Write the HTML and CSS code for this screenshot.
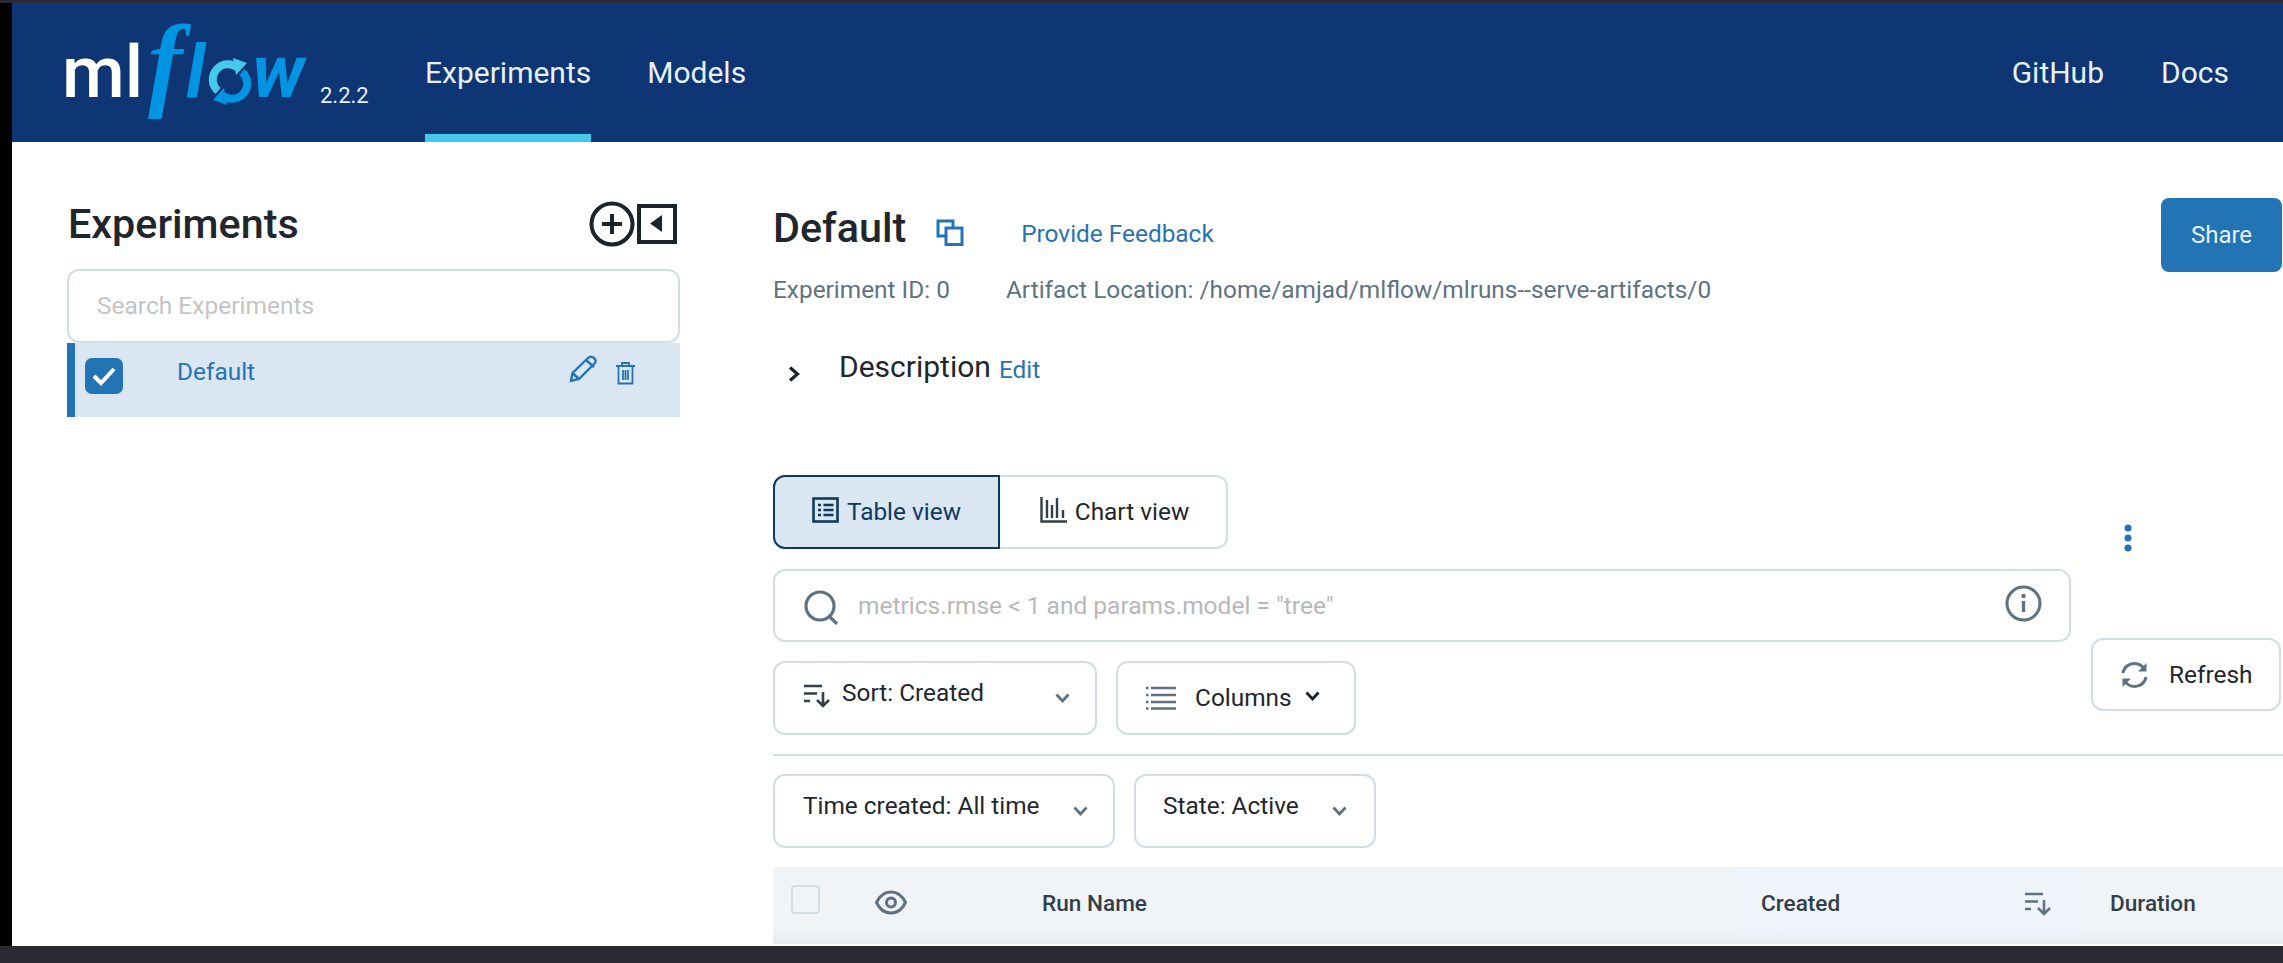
FILE: index.html
```html
<!DOCTYPE html>
<html lang="en">
<head>
<meta charset="utf-8">
<title>MLflow</title>
<link rel="stylesheet" href="styles.css">
</head>
<body>
<div class="app">
  <div class="strip-top"></div>
  <div class="shell">
    <div class="rail"></div>
    <div class="page">
      <header class="header">
        <svg class="logo" width="320" height="139" viewBox="0 0 320 139">
          <text class="logo-ml" x="2" y="94">ml</text>
          <text class="logo-f" x="88" y="94">f</text>
          <text class="logo-flow" x="126" y="94">l</text>
          <text class="logo-flow" x="192" y="94">w</text>
          <path class="logo-ring-a" d="M158 88 A15 15 0 0 1 178 65"/>
          <path class="logo-ring-b" d="M182 69 A15 15 0 0 1 162 92"/>
          <path class="logo-arrow-a" d="M173 55 L187 60 L176 72 Z"/>
          <path class="logo-arrow-b" d="M167 102 L153 97 L164 85 Z"/>
          <text class="logo-version" x="260" y="100">2.2.2</text>
        </svg>
        <nav class="nav">
          <a class="nav-link nav-active">Experiments</a>
          <a class="nav-link">Models</a>
        </nav>
        <nav class="nav nav-right">
          <a class="nav-link">GitHub</a>
          <a class="nav-link">Docs</a>
        </nav>
      </header>
      <div class="content">
        <aside class="sidebar">
          <div class="side-head">
            <h2 class="side-title">Experiments</h2>
            <div class="side-actions">
              <svg width="46" height="46" viewBox="0 0 46 46" class="ic-plus"><circle cx="23" cy="23" r="20.5" fill="none" stroke="#1c2329" stroke-width="4"/><path d="M23 13v20M13 23h20" stroke="#1c2329" stroke-width="4" fill="none"/></svg>
              <svg width="40" height="40" viewBox="0 0 40 40" class="ic-collapse"><rect x="2" y="2" width="36" height="36" fill="none" stroke="#1c2329" stroke-width="4"/><path d="M25 11v17L13 19.5Z" fill="#1c2329"/></svg>
            </div>
          </div>
          <div class="side-search">Search Experiments</div>
          <div class="side-row">
            <span class="side-check"><svg width="38" height="36" viewBox="0 0 38 36"><path d="M9 18l7 7L29 11" fill="none" stroke="#fff" stroke-width="4"/></svg></span>
            <span class="side-name">Default</span>
            <svg class="ic-pencil" width="30" height="28" viewBox="0 0 30 28"><path d="M2 26l1.500-8L19 3c1.500-1.500 4-1.500 6 0 2 1.800 2 4 .5 5.500L10 24ZM3.500 18L10 24M17 5l8 7" fill="none" stroke="#2374b5" stroke-width="2.400"/></svg>
            <svg class="ic-trash" width="21" height="24" viewBox="0 0 21 24"><path d="M1 5h19M7 5V2h7v3M3.500 5v17.500h14V5M8 9v10M10.500 9v10M13 9v10" fill="none" stroke="#2374b5" stroke-width="1.800"/></svg>
          </div>
        </aside>
        <main class="main">
          <div class="title-row">
            <h1 class="title">Default</h1>
            <svg class="ic-copy" width="28" height="27" viewBox="0 0 28 27"><path d="M17 8V2H2v15h7" fill="none" stroke="#2374b5" stroke-width="3"/><rect x="10" y="9" width="16" height="16.500" fill="none" stroke="#2374b5" stroke-width="3"/></svg>
            <a class="feedback">Provide Feedback</a>
            <button class="share">Share</button>
          </div>
          <div class="meta">
            <span>Experiment ID: 0</span>
            <span>Artifact Location: /home/amjad/mlflow/mlruns--serve-artifacts/0</span>
          </div>
          <div class="desc">
            <svg class="ic-chev-right" width="12" height="16" viewBox="0 0 12 16"><path d="M2 1.500L9.500 8 2 14.500" fill="none" stroke="#1c2329" stroke-width="3.200"/></svg>
            <span class="desc-label">Description</span>
            <a class="desc-edit">Edit</a>
          </div>
          <div class="toolbar">
            <div class="toolbar-left">
              <div class="segments">
                <div class="segment segment-active">
                  <svg width="27" height="26" viewBox="0 0 27 26"><rect x="1.500" y="1.500" width="24" height="23" fill="none" stroke="#0e3a5f" stroke-width="2.600"/><path d="M6 8h3M6 13h3M6 18h3M11.500 8h10M11.500 13h10M11.500 18h10" stroke="#0e3a5f" stroke-width="2.400" fill="none"/></svg>
                  <span>Table view</span>
                </div>
                <div class="segment segment-chart">
                  <svg width="27" height="26" viewBox="0 0 27 26"><path d="M1.500 0v24.500H27M7 3v18M12 8v13M17 1v20M23 13v8" fill="none" stroke="#333f48" stroke-width="2.400"/></svg>
                  <span>Chart view</span>
                </div>
              </div>
              <div class="filter">
                <svg class="ic-search" width="35" height="35" viewBox="0 0 35 35"><circle cx="16" cy="16" r="14" fill="none" stroke="#5f7281" stroke-width="3.200"/><path d="M25 26l8 8" stroke="#5f7281" stroke-width="3.200"/></svg>
                <span class="filter-text">metrics.rmse &lt; 1 and params.model = "tree"</span>
                <svg class="ic-info" width="37" height="37" viewBox="0 0 37 37"><circle cx="18.500" cy="18.500" r="16.500" fill="none" stroke="#5f7281" stroke-width="3"/><path d="M18.500 16v11" stroke="#5f7281" stroke-width="3.400"/><circle cx="18.500" cy="11" r="2.200" fill="#5f7281"/></svg>
              </div>
              <div class="controls">
                <div class="control control-sort">
                  <svg class="ic-sort" width="27" height="24" viewBox="0 0 27 24"><path d="M0 2h18M0 9.500h13M0 17h6M19 8v14M13 16l6 6 6-6" fill="none" stroke="#333f48" stroke-width="2.600"/></svg>
                  <span>Sort: Created</span>
                  <svg class="ic-chev" width="15" height="10" viewBox="0 0 15 10"><path d="M1.500 1.500l6 6.500 6-6.500" fill="none" stroke="#5f7281" stroke-width="2.800"/></svg>
                </div>
                <div class="control control-columns">
                  <svg class="ic-cols" width="30" height="24" viewBox="0 0 30 24"><path d="M0 2h2.500M0 9h2.500M0 16h2.500M0 22.500h2.500M5 2h25M5 9h25M5 16h25M5 22.500h25" fill="none" stroke="#5f7281" stroke-width="2.400"/></svg>
                  <span>Columns</span>
                  <svg class="ic-chev ic-chev-dark" width="15" height="10" viewBox="0 0 15 10"><path d="M1.500 1.500l6 6.500 6-6.500" fill="none" stroke="#1c2329" stroke-width="2.800"/></svg>
                </div>
              </div>
            </div>
            <div class="toolbar-right">
              <svg class="ic-kebab" width="8" height="28" viewBox="0 0 8 28"><circle cx="4" cy="4" r="3.500" fill="#2374b5"/><circle cx="4" cy="14" r="3.500" fill="#2374b5"/><circle cx="4" cy="24" r="3.500" fill="#2374b5"/></svg>
              <div class="refresh">
                <svg width="27" height="28" viewBox="0 0 27 28"><path d="M2 12C3 6 8 2.500 13.500 2.500 17.500 2.500 21 4.500 23.500 8M25 16c-1 6-6 9.500-11.500 9.500-4 0-7.500-2-10-5.500" fill="none" stroke="#5f7281" stroke-width="3"/><path d="M25.500 2v8.500H17ZM1.500 26v-8.500H10Z" fill="#5f7281"/></svg>
                <span>Refresh</span>
              </div>
            </div>
          </div>
          <div class="divider"></div>
          <div class="controls controls-time">
            <div class="control control-time">
              <span>Time created: All time</span>
              <svg class="ic-chev" width="15" height="10" viewBox="0 0 15 10"><path d="M1.500 1.500l6 6.500 6-6.500" fill="none" stroke="#5f7281" stroke-width="2.800"/></svg>
            </div>
            <div class="control control-state">
              <span>State: Active</span>
              <svg class="ic-chev" width="15" height="10" viewBox="0 0 15 10"><path d="M1.500 1.500l6 6.500 6-6.500" fill="none" stroke="#5f7281" stroke-width="2.800"/></svg>
            </div>
          </div>
          <div class="table-head">
            <span class="th-check"></span>
            <svg class="ic-eye" width="32" height="25" viewBox="0 0 32 25"><path d="M1.500 12.500C5 5 10 2 16 2s11 3 14.500 10.500C27 20 22 23 16 23S5 20 1.500 12.500Z" fill="none" stroke="#5f7281" stroke-width="3"/><circle cx="16" cy="12.500" r="4.500" fill="none" stroke="#5f7281" stroke-width="3"/></svg>
            <span class="th-name">Run Name</span>
            <div class="th-created">
              <span>Created</span>
              <svg class="ic-sort-head" width="27" height="24" viewBox="0 0 27 24"><path d="M0 2h18M0 9.500h13M0 17h6M19 8v14M13 16l6 6 6-6" fill="none" stroke="#5f7281" stroke-width="2.600"/></svg>
            </div>
            <span class="th-duration">Duration</span>
          </div>
        </main>
      </div>
    </div>
  </div>
  <div class="strip-bottom"></div>
</div>
</body>
</html>
```
FILE: styles.css
```css
* { box-sizing: border-box; }
html, body { margin: 0; height: 100%; overflow: hidden; }
body { font-family: Roboto, "Liberation Sans", sans-serif; color: #1f272d; background: #fff; }
h1, h2 { margin: 0; }
svg { display: block; flex: none; }

.app { height: 963px; display: flex; flex-direction: column; }
.strip-top { height: 3px; background: #2a2a35; }
.strip-bottom { height: 17px; background: #2a2a35; }
.shell { flex: 1; display: flex; min-height: 0; }
.rail { width: 12px; background: #000; }
.page { flex: 1; min-width: 0; display: flex; flex-direction: column; background: #fff; }

.header { height: 139px; display: flex; background: #0e3574; padding-left: 48px; padding-right: 54px; }
.logo-ml { font: 500 72px Roboto, sans-serif; fill: #fff; }
.logo-f { font: italic 700 104px "Liberation Serif", serif; fill: #0194e2; }
.logo-flow { font: italic 700 74px Roboto, sans-serif; fill: #0194e2; }
.logo-ring-a { fill: none; stroke: #43c9ed; stroke-width: 8; }
.logo-ring-b { fill: none; stroke: #0194e2; stroke-width: 8; }
.logo-arrow-a { fill: #43c9ed; }
.logo-arrow-b { fill: #0194e2; }
.logo-version { font: 400 22px Roboto, sans-serif; fill: #e6f1f5; }
.nav { display: flex; gap: 56px; margin-left: 45px; }
.nav-right { margin-left: auto; gap: 57px; }
.nav-link { display: flex; align-items: center; font-size: 30px; line-height: 40px; color: #e6f1f5; }
.nav-active { box-shadow: inset 0 -8px 0 #43c9ed; }

.content { flex: 1; display: flex; min-height: 0; }
.sidebar { width: 668px; padding-left: 55px; flex: none; }
.side-head { width: 613px; height: 48px; margin-top: 58px; display: flex; justify-content: space-between; }
.side-title { font-size: 41.3px; line-height: 49px; font-weight: 500; padding-left: 1px; }
.side-actions { display: flex; gap: 2px; padding-right: 3px; }
.ic-plus { margin-top: 1px; }
.ic-collapse { margin-top: 4px; }
.side-search { width: 613px; height: 74px; margin-top: 21px; border: 2px solid #d3dde4; border-radius: 12px; padding: 0 28px; font-size: 24.5px; line-height: 70px; color: #c4c4c4; }
.side-row { width: 613px; height: 74px; display: flex; align-items: flex-start; background: #dae6f2; border-left: 8px solid #2374b5; padding-right: 44px; }
.side-check { width: 38px; height: 36px; margin: 15px 0 0 10px; border-radius: 7px; background: #2374b5; }
.side-name { margin: 14px 0 0 54px; font-size: 24.4px; line-height: 30px; color: #2374b5; }
.ic-pencil { margin: 12px 0 0 auto; }
.ic-trash { margin: 18px 0 0 16px; }

.main { flex: 1; min-width: 0; padding-left: 93px; }
.title-row { height: 74px; margin-top: 56px; display: flex; align-items: flex-start; }
.title { font-size: 41.3px; line-height: 48px; font-weight: 500; margin-top: 6px; }
.ic-copy { margin: 21px 0 0 30px; }
.feedback { margin: 21px 0 0 57px; font-size: 24.4px; line-height: 30px; color: #2a72ad; }
.share { width: 121px; height: 74px; margin-left: auto; margin-right: 1px; border: 0; border-radius: 8px; background: #2374b5; color: #e6f1f5; font: 400 24px Roboto, sans-serif; }
.meta { display: flex; gap: 56px; margin-top: 3px; font-size: 24.4px; line-height: 30px; color: #5f7281; }
.desc { display: flex; align-items: flex-start; height: 36px; margin-top: 44px; }
.ic-chev-right { margin: 17px 0 0 15px; }
.desc-label { margin-left: 39px; font-size: 30px; line-height: 36px; }
.desc-edit { margin: 6px 0 0 8px; font-size: 24.4px; line-height: 30px; color: #2a72ad; }

.toolbar { display: flex; margin-top: 90px; }
.toolbar-left { width: 1298px; flex: none; }
.toolbar-right { width: 190px; margin-left: 20px; flex: none; }
.segments { display: flex; height: 74px; }
.segment { width: 228px; display: flex; align-items: center; justify-content: center; gap: 8px; border: 2px solid #d3dde4; border-left: 0; border-radius: 0 12px 12px 0; font-size: 24.4px; line-height: 30px; }
.segment svg { margin-top: -4px; }
.segment-chart { padding-left: 3px; }
.segment-active { width: 227px; border: 2px solid #0e3a5f; border-radius: 12px 0 0 12px; background: #dae6f2; color: #0e3a5f; }
.filter { height: 73px; margin-top: 20px; display: flex; align-items: center; border: 2px solid #d3dde4; border-radius: 12px; padding: 0 27px 0 29px; font-size: 24.5px; line-height: 30px; color: #b8b8b8; }
.filter-text { margin-left: 19px; }
.ic-search { margin-top: 3px; }
.ic-info { margin-left: auto; margin-top: -4px; }
.controls { display: flex; gap: 19px; margin-top: 19px; }
.control { height: 74px; display: flex; align-items: flex-start; border: 2px solid #d3dde4; border-radius: 12px; font-size: 24.4px; line-height: 30px; }
.control-sort { width: 324px; padding: 15px 25px 0 29px; }
.control-sort span { margin-left: 11px; }
.ic-sort { margin-top: 6px; }
.control .ic-chev { margin: 15px 0 0 auto; }
.control-columns { width: 240px; align-items: center; padding: 0 34px 0 28px; }
.control-columns span { margin-left: 19px; }
.control-columns .ic-chev { margin: -4px 0 0 auto; }
.control-time { width: 342px; padding: 15px 25px 0 28px; }
.control-state { width: 242px; padding: 15px 27px 0 27px; }
.ic-kebab { margin: 49px 0 0 33px; }
.refresh { height: 73px; margin-top: 86px; display: flex; align-items: center; border: 2px solid #d3dde4; border-radius: 12px; padding-left: 28px; font-size: 24.4px; line-height: 30px; }
.refresh span { margin-left: 21px; }
.divider { height: 2px; margin-top: 19px; background: #d3dde4; }
.controls-time { margin-top: 18px; }

.table-head { height: 77px; margin-top: 19px; display: flex; align-items: flex-start; padding-left: 18px; background: linear-gradient(#f0f4f7 80%, #e8ecef 100%); font-size: 22.6px; line-height: 28px; font-weight: 500; color: #333f48; }
.th-check { width: 29px; height: 29px; margin-top: 18px; border: 2px solid #d3dde4; border-radius: 4px; flex: none; }
.ic-eye { margin: 23px 0 0 55px; }
.th-name { width: 691px; margin: 23px 0 0 135px; flex: none; }
.th-created { width: 348px; height: 100%; display: flex; align-items: flex-start; padding: 23px 29px 0 28px; background: linear-gradient(#eff4fb 80%, #e8edf3 100%); flex: none; }
.ic-sort-head { margin: 2px 0 0 auto; }
.th-duration { margin: 23px 0 0 29px; }
```
